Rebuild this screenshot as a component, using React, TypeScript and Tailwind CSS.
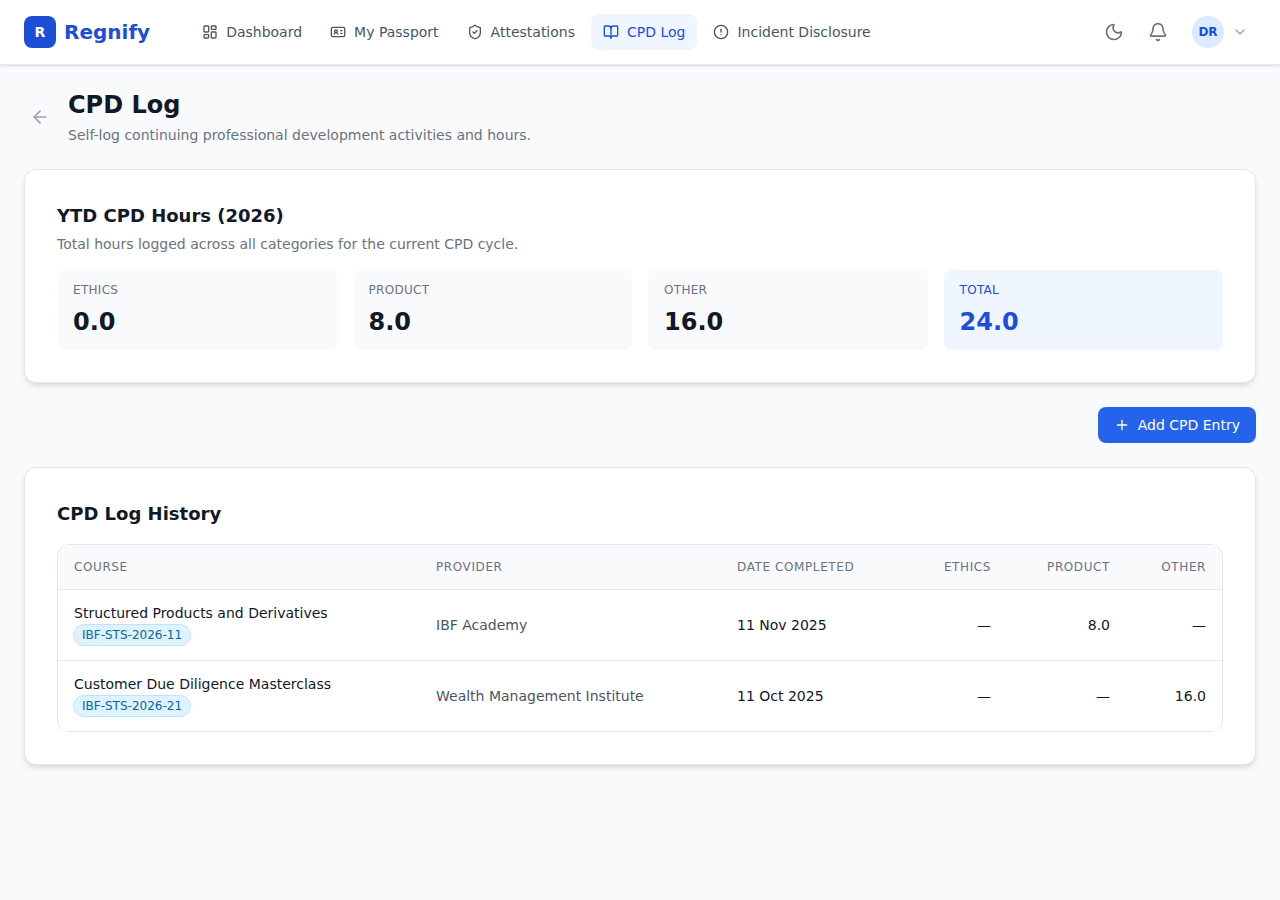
import { ArrowLeft, Bell, BookOpen, ChevronDown, CircleAlert, IdCard, LayoutDashboard, Moon, Plus, ShieldCheck } from "lucide-react";

const navItems = [
  { label: "Dashboard", icon: LayoutDashboard },
  { label: "My Passport", icon: IdCard },
  { label: "Attestations", icon: ShieldCheck },
  { label: "CPD Log", icon: BookOpen, active: true },
  { label: "Incident Disclosure", icon: CircleAlert },
];

const stats = [
  { label: "Ethics", value: "0.0" },
  { label: "Product", value: "8.0" },
  { label: "Other", value: "16.0" },
];

const rows = [
  {
    course: "Structured Products and Derivatives",
    code: "IBF-STS-2026-11",
    provider: "IBF Academy",
    date: "11 Nov 2025",
    ethics: "—",
    product: "8.0",
    other: "—",
  },
  {
    course: "Customer Due Diligence Masterclass",
    code: "IBF-STS-2026-21",
    provider: "Wealth Management Institute",
    date: "11 Oct 2025",
    ethics: "—",
    product: "—",
    other: "16.0",
  },
];

function Header() {
  return (
    <header className="h-[65px] bg-white border-b border-[#e5e7eb] shadow-sm flex items-center px-6">
      <div className="flex items-center gap-2">
        <div className="w-8 h-8 rounded-lg bg-[#1d4ed8] flex items-center justify-center text-white text-sm font-bold">R</div>
        <span className="text-xl font-bold text-[#1d4ed8]">Regnify</span>
      </div>
      <nav className="flex items-center gap-1 ml-[40px]">
        {navItems.map((item) => (
          <a
            key={item.label}
            className={
              item.active
                ? "flex items-center gap-2 h-9 px-3 rounded-lg text-sm bg-[#eff6ff] text-[#1d4ed8]"
                : "flex items-center gap-2 h-9 px-3 rounded-lg text-sm text-[#4b5563]"
            }
          >
            <item.icon size={16} />
            {item.label}
          </a>
        ))}
      </nav>
      <div className="ml-auto flex items-center">
        <button className="w-9 h-9 flex items-center justify-center text-[#6b7280]">
          <Moon size={20} />
        </button>
        <button className="w-9 h-9 flex items-center justify-center text-[#6b7280] ml-2">
          <Bell size={20} />
        </button>
        <div className="flex items-center gap-2 ml-4">
          <div className="w-8 h-8 rounded-full bg-[#dbeafe] text-[#1d4ed8] flex items-center justify-center text-xs font-bold">DR</div>
          <ChevronDown size={16} className="text-[#9ca3af]" />
        </div>
        <div className="w-2" />
      </div>
    </header>
  );
}

export default function App() {
  return (
    <div className="min-h-[900px] bg-[#f9fafb] text-[#111827] font-['DejaVu_Sans',sans-serif]">
      <Header />
      <main className="p-6">
        {/* Title */}
        <div className="flex items-center gap-3 mb-6">
          <button className="w-8 h-8 flex items-center justify-center text-[#9ca3af]">
            <ArrowLeft size={20} />
          </button>
          <div>
            <h1 className="text-2xl font-bold leading-8">CPD Log</h1>
            <p className="text-sm text-[#6b7280] mt-1">Self-log continuing professional development activities and hours.</p>
          </div>
        </div>

        {/* YTD summary */}
        <section className="bg-white border border-[#e5e7eb] rounded-xl shadow-md p-8">
          <h2 className="text-lg font-semibold leading-7">YTD CPD Hours (2026)</h2>
          <p className="text-sm text-[#6b7280] mt-1">Total hours logged across all categories for the current CPD cycle.</p>
          <div className="grid grid-cols-4 gap-4 mt-4">
            {stats.map((s) => (
              <div key={s.label} className="h-20 bg-[#f9fafb] rounded-lg px-4 pt-3">
                <p className="text-xs uppercase tracking-wide text-[#6b7280]">{s.label}</p>
                <p className="text-2xl font-bold mt-2">{s.value}</p>
              </div>
            ))}
            <div className="h-20 bg-[#eff6ff] rounded-lg px-4 pt-3">
              <p className="text-xs uppercase tracking-wide text-[#1d4ed8]">Total</p>
              <p className="text-2xl font-bold mt-2 text-[#1d4ed8]">24.0</p>
            </div>
          </div>
        </section>

        <div className="flex justify-end mt-6">
          <button className="flex items-center gap-2 h-9 px-4 rounded-lg bg-[#2563eb] text-white text-sm">
            <Plus size={16} />
            Add CPD Entry
          </button>
        </div>

        {/* History */}
        <section className="bg-white border border-[#e5e7eb] rounded-xl shadow-md p-8 mt-6">
          <h2 className="text-lg font-semibold leading-7 mb-4">CPD Log History</h2>
          <div className="border border-[#e5e7eb] border-b-0 rounded-xl overflow-hidden">
            <table className="w-full table-fixed text-sm">
              <thead>
                <tr className="bg-[#f9fafb] border-b border-[#e5e7eb] text-xs uppercase tracking-wider text-[#6b7280]">
                  <th className="w-[362px] h-11 px-4 text-left font-medium">Course</th>
                  <th className="w-[301px] px-4 text-left font-medium">Provider</th>
                  <th className="w-[190px] px-4 text-left font-medium">Date Completed</th>
                  <th className="w-[96px] px-4 text-right font-medium">Ethics</th>
                  <th className="w-[119px] px-4 text-right font-medium">Product</th>
                  <th className="px-4 text-right font-medium">Other</th>
                </tr>
              </thead>
              <tbody>
                {rows.map((r) => (
                  <tr key={r.code} className="border-b border-[#e5e7eb]">
                    <td className="h-[71px] px-4">
                      <div>{r.course}</div>
                      <span className="block w-fit mt-px -ml-px px-2 h-[22px] leading-5 rounded-full bg-[#e0f2fe] border border-[#bae6fd] text-[#0369a1] text-xs">{r.code}</span>
                    </td>
                    <td className="px-4 text-[#4b5563]">{r.provider}</td>
                    <td className="px-4">{r.date}</td>
                    <td className="px-4 text-right">{r.ethics}</td>
                    <td className="px-4 text-right">{r.product}</td>
                    <td className="px-4 text-right">{r.other}</td>
                  </tr>
                ))}
              </tbody>
            </table>
          </div>
        </section>
      </main>
    </div>
  );
}
